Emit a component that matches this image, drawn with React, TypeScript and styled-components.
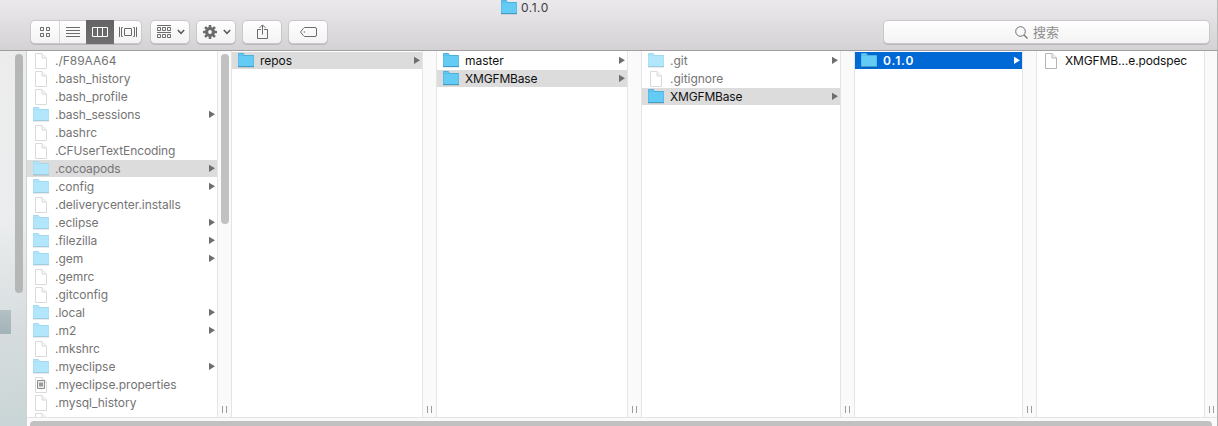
import React from "react";
import styled, { createGlobalStyle, css } from "styled-components";

const GlobalStyle = createGlobalStyle`
  * { box-sizing: border-box; }
  body {
    margin: 0;
    overflow: hidden;
    font-family: Inter, "Noto Sans CJK SC", sans-serif;
    font-size: 12px;
    color: #1c1c1c;
  }
`;

const Window = styled.div`
  display: flex;
  flex-direction: column;
  width: 1218px;
  height: 426px;
  overflow: hidden;
  background: #fff;
`;

const Header = styled.header`
  flex: none;
  height: 51px;
  background: linear-gradient(#ebe9eb, #d4d2d4);
  border-bottom: 1px solid #a09ea0;
  border-right: 1px solid #b9b9b9;
`;

const TitleBar = styled.div`
  display: flex;
  align-items: center;
  height: 21px;
  padding: 0 0 7px 501px;
  gap: 4px;
  color: #3c3c3c;
  letter-spacing: 0.5px;
`;

const Toolbar = styled.div`
  display: flex;
  align-items: center;
  height: 22px;
  padding: 0 8px 0 31px;
`;

const buttonFace = css`
  height: 22px;
  border-radius: 4px;
  background: linear-gradient(#fefefe, #f3f3f3);
  box-shadow: 0 0 0 1px #cac8ca, 0 1px 0 1px #b9b7b9;
`;

const Segments = styled.div`
  ${buttonFace}
  display: flex;
  width: 110px;
  margin-right: 10px;
`;

const Segment = styled.div<{ $width: number; $active?: boolean; $divider?: boolean }>`
  display: flex;
  align-items: center;
  justify-content: center;
  width: ${(p) => p.$width}px;
  height: ${(p) => (p.$active ? 24 : 22)}px;
  margin-top: ${(p) => (p.$active ? -1 : 0)}px;
  background: ${(p) => (p.$active ? "linear-gradient(#646464, #6f6f6f)" : "none")};
  border-right: ${(p) => (p.$divider ? "1px solid #d5d5d5" : "none")};
`;

const ToolButton = styled.div<{ $inset?: number }>`
  ${buttonFace}
  display: flex;
  align-items: center;
  justify-content: center;
  gap: 6px;
  width: 38px;
  margin-right: 8px;
  padding-left: ${(p) => p.$inset ?? 0}px;
`;

const Search = styled.div`
  ${buttonFace}
  display: flex;
  align-items: center;
  justify-content: center;
  gap: 5px;
  width: 325px;
  margin-left: auto;
  padding-right: 27px;
  padding-left: 8px;
  font-size: 13px;
  color: #8e8e8e;
`;

const Placeholder = styled.span`
  padding-bottom: 2px;
`;

const Content = styled.main`
  display: flex;
  flex: 1;
  min-height: 0;
`;

const Sidebar = styled.aside`
  display: flex;
  flex-direction: column;
  flex: none;
  width: 27px;
  background: linear-gradient(172deg, #ececec 0%, #ebedee 45%, #d6dcde 75%, #c9d5d6 100%);
  border-right: 1px solid #d0d1d1;
`;

const SidebarThumb = styled.div`
  width: 8px;
  height: 239px;
  margin: 3px 0 0 15px;
  border-radius: 4px;
  background: #b5b6b6;
`;

const SidebarPatch = styled.div`
  width: 11px;
  height: 24px;
  margin-top: 17px;
  background: linear-gradient(#b3c0c6, #a3b3b8);
`;

const Browser = styled.div`
  display: flex;
  flex-direction: column;
  flex: 1;
  min-width: 0;
  border-right: 1px solid #b0b0b0;
`;

const Columns = styled.div`
  display: flex;
  height: 366px;
`;

const Column = styled.div<{ $width: number }>`
  flex: none;
  width: ${(p) => p.$width}px;
  padding-top: 1px;
  overflow: hidden;
`;

const Gutter = styled.div`
  display: flex;
  flex-direction: column;
  align-items: center;
  flex: none;
  width: 15px;
  padding: 3px 0 4px;
  background: #fafafa;
  border: solid #e5e5e5;
  border-width: 0 1px;
  &:last-child {
    width: 13px;
    border-right: none;
  }
`;

const ColumnThumb = styled.div`
  width: 8px;
  height: 170px;
  border-radius: 4px;
  background: #c1c1c1;
`;

const Grip = styled.div`
  width: 5px;
  height: 7px;
  margin-top: auto;
  border: solid #9d9d9d;
  border-width: 0 1px;
`;

type Tone = "none" | "grey" | "blue";
const rowColors: Record<Tone, string> = { none: "transparent", grey: "#dcdcdc", blue: "#0069d6" };

const Row = styled.div<{ $tone: Tone; $dim: boolean }>`
  display: flex;
  align-items: center;
  height: 17px;
  margin-bottom: 1px;
  padding: 0 2px 0 6px;
  background: ${(p) => rowColors[p.$tone]};
  color: ${(p) => (p.$tone === "blue" ? "#fff" : p.$dim ? "#747474" : "#111")};
  font-weight: ${(p) => (p.$tone === "blue" ? 600 : 400)};
  svg { flex: none; }
`;

const IconBox = styled.span`
  display: flex;
  width: 22px;
`;

const Label = styled.span<{ $spacing: number }>`
  flex: 1;
  white-space: nowrap;
  line-height: 17px;
  letter-spacing: ${(p) => p.$spacing}px;
`;

const ScrollTrack = styled.div`
  height: 9px;
  padding: 3px 5px 0 3px;
  border-top: 1px solid #e3e3e3;
  background: #fafafa;
`;

const ScrollThumb = styled.div`
  height: 8px;
  border-radius: 4px;
  background: #c1c1c1;
`;

const FolderIcon = ({ dim }: { dim?: boolean }) => (
  <svg width="16" height="15" viewBox="0 0 16 15">
    <path d="M0 14V.8Q0 0 .8 0H5.4L6.8 2h8.5q.7 0 .7.7V14z" fill={dim ? "#a3d9ef" : "#4db0dc"} />
    <path d="M.5 3h15v10.2H.5z" fill={dim ? "#b2e6fb" : "#64cbf4"} />
    <path d="M.7.9h4.5l1.3 1.7H.7z" fill={dim ? "#b2e6fb" : "#64cbf4"} />
    <path d="M0 13.5h16" stroke={dim ? "#9bcee5" : "#3f9dca"} />
    <path d="M0 14.5h16" stroke="#000" opacity=".08" />
  </svg>
);

const FileIcon = ({ image, dim }: { image?: boolean; dim?: boolean }) => {
  const edge = dim ? "#dadada" : "#b5b5b5";
  return (
    <svg width="16" height="16" viewBox="0 0 16 16">
      <path d="M2.5.5H9L13.5 5v10.5h-11z" fill="#fff" stroke={edge} />
      <path d="M9 .5V5h4.5" fill="#f3f3f3" stroke={edge} />
      {image && <path d="M4.5 3.5h7v8h-7z" fill="#eee" stroke="#8c8c8c" />}
      {image && <path d="M6 5.5h4v4H6z" fill="#9a9a9a" />}
    </svg>
  );
};

const Arrow = ({ light }: { light?: boolean }) => (
  <svg width="6" height="9" viewBox="0 0 6 9">
    <path d="M0 .7 6 4.3 0 8z" fill={light ? "#fff" : "#6e6e6e"} />
  </svg>
);

const Chevron = () => (
  <svg width="8" height="6" viewBox="0 0 8 6">
    <path d="M.8 1 4 4.3 7.2 1" fill="none" stroke="#5c5c5c" strokeWidth="1.6" />
  </svg>
);

const GridIcon = () => (
  <svg width="12" height="12" viewBox="0 0 12 12" fill="none" stroke="#6b6b6b">
    <path d="M1.5 1.5h3v3h-3zM7.5 1.5h3v3h-3zM1.5 7.5h3v3h-3zM7.5 7.5h3v3h-3z" />
  </svg>
);

const ListIcon = () => (
  <svg width="14" height="12" viewBox="0 0 14 12" stroke="#6b6b6b">
    <path d="M0 1.5h14M0 4.5h14M0 7.5h14M0 10.5h14" />
  </svg>
);

const ColumnsIcon = () => (
  <svg width="16" height="12" viewBox="0 0 16 12" fill="none" stroke="#fff">
    <path d="M.5 1.5h15v9H.5zM5.5 1.5v9M10.5 1.5v9" />
  </svg>
);

const CoverFlowIcon = () => (
  <svg width="18" height="12" viewBox="0 0 18 12" fill="none" stroke="#6b6b6b">
    <path d="M5.5 2.5h7v7h-7zM.5 1v10M17.5 1v10M2 1.5h.5v9H2M3 1.5h.8M3 10.5h.8M16 1.5h-.5v9h.5M15 1.5h-.8M15 10.5h-.8" />
  </svg>
);

const GroupIcon = () => (
  <svg width="14" height="14" viewBox="0 0 14 14" fill="none" stroke="#6b6b6b">
    <path d="M0 .5h14M0 7.5h14M.5 2.5h3v3h-3zM5.5 2.5h3v3h-3zM10.5 2.5h3v3h-3zM.5 9.5h3v3h-3zM5.5 9.5h3v3h-3zM10.5 9.5h3v3h-3z" />
  </svg>
);

const GearIcon = () => (
  <svg width="14" height="14" viewBox="-7 -7 14 14">
    <g fill="#6b6b6b">
      {[0, 45, 90, 135].map((angle) => (
        <rect key={angle} x="-1.3" y="-7" width="2.6" height="14" rx=".5" transform={`rotate(${angle})`} />
      ))}
      <circle r="5" />
    </g>
    <circle r="1.9" fill="#f8f8f8" />
  </svg>
);

const ShareIcon = () => (
  <svg width="12" height="16" viewBox="0 0 12 16" fill="none" stroke="#6b6b6b">
    <path d="M4 5.5H.5v9h10v-9H7M5.5 10.5V1M2.5 3.9 5.5.9 8.5 3.9" />
  </svg>
);

const TagIcon = () => (
  <svg width="17" height="10" viewBox="0 0 17 10" fill="none" stroke="#6b6b6b">
    <path d="M4.5.5H15q1.5 0 1.5 1.5v6q0 1.5-1.5 1.5H4.5Q3.7 9.5.6 5 3.7.5 4.5.5z" />
    <circle cx="4.3" cy="5" r=".7" fill="#6b6b6b" stroke="none" />
  </svg>
);

const SearchIcon = () => (
  <svg width="13" height="13" viewBox="0 0 13 13" fill="none" stroke="#707070">
    <circle cx="5.5" cy="5.5" r="4.8" />
    <path d="M9 9l3.5 3.5" strokeWidth="1.2" />
  </svg>
);

interface Item {
  name: string;
  kind: "folder" | "file" | "image";
  dim?: boolean;
  tone?: Tone;
  spacing?: number;
}

const folder = (name: string, extra: Partial<Item> = {}): Item => ({ name, kind: "folder", ...extra });
const file = (name: string, extra: Partial<Item> = {}): Item => ({ name, kind: "file", ...extra });
const dim = { dim: true };

const columns: { width: number; items: Item[]; thumb?: boolean }[] = [
  {
    width: 190,
    thumb: true,
    items: [
      file("./F89AA64", dim),
      file(".bash_history", dim),
      file(".bash_profile", dim),
      folder(".bash_sessions", dim),
      file(".bashrc", dim),
      file(".CFUserTextEncoding", { dim: true, spacing: -0.1 }),
      folder(".cocoapods", { dim: true, tone: "grey", spacing: -0.12 }),
      folder(".config", dim),
      file(".deliverycenter.installs", dim),
      folder(".eclipse", dim),
      folder(".filezilla", dim),
      folder(".gem", dim),
      file(".gemrc", dim),
      file(".gitconfig", dim),
      folder(".local", dim),
      folder(".m2", dim),
      file(".mkshrc", dim),
      folder(".myeclipse", dim),
      { name: ".myeclipse.properties", kind: "image", dim: true },
      file(".mysql_history", dim),
      file("", dim),
    ],
  },
  { width: 190, items: [folder("repos", { tone: "grey" })] },
  { width: 190, items: [folder("master"), folder("XMGFMBase", { tone: "grey", spacing: -0.16 })] },
  {
    width: 198,
    items: [folder(".git", dim), file(".gitignore", dim), folder("XMGFMBase", { tone: "grey", spacing: -0.16 })],
  },
  { width: 167, items: [folder("0.1.0", { tone: "blue", spacing: 0.9 })] },
  { width: 167, items: [file("XMGFMB…e.podspec", { spacing: -0.12 })] },
];

const FileRow = ({ item }: { item: Item }) => (
  <Row $tone={item.tone ?? "none"} $dim={!!item.dim}>
    <IconBox>
      {item.kind === "folder" ? (
        <FolderIcon dim={item.dim} />
      ) : (
        <FileIcon dim={item.dim} image={item.kind === "image"} />
      )}
    </IconBox>
    <Label $spacing={item.spacing ?? -0.03}>{item.name}</Label>
    {item.kind === "folder" && <Arrow light={item.tone === "blue"} />}
  </Row>
);

export default function App() {
  return (
    <Window>
      <GlobalStyle />
      <Header>
        <TitleBar>
          <FolderIcon />
          <span>0.1.0</span>
        </TitleBar>
        <Toolbar>
          <Segments>
            <Segment $width={29} $divider><GridIcon /></Segment>
            <Segment $width={26}><ListIcon /></Segment>
            <Segment $width={28} $active><ColumnsIcon /></Segment>
            <Segment $width={27}><CoverFlowIcon /></Segment>
          </Segments>
          <ToolButton $inset={2}><GroupIcon /><Chevron /></ToolButton>
          <ToolButton $inset={2}><GearIcon /><Chevron /></ToolButton>
          <ToolButton $inset={2}><ShareIcon /></ToolButton>
          <ToolButton><TagIcon /></ToolButton>
          <Search><SearchIcon /><Placeholder>搜索</Placeholder></Search>
        </Toolbar>
      </Header>
      <Content>
        <Sidebar>
          <SidebarThumb />
          <SidebarPatch />
        </Sidebar>
        <Browser>
          <Columns>
            {columns.map((column, index) => (
              <React.Fragment key={index}>
                <Column $width={column.width}>
                  {column.items.map((item, row) => <FileRow key={row} item={item} />)}
                </Column>
                <Gutter>
                  {column.thumb && <ColumnThumb />}
                  <Grip />
                </Gutter>
              </React.Fragment>
            ))}
          </Columns>
          <ScrollTrack><ScrollThumb /></ScrollTrack>
        </Browser>
      </Content>
    </Window>
  );
}
